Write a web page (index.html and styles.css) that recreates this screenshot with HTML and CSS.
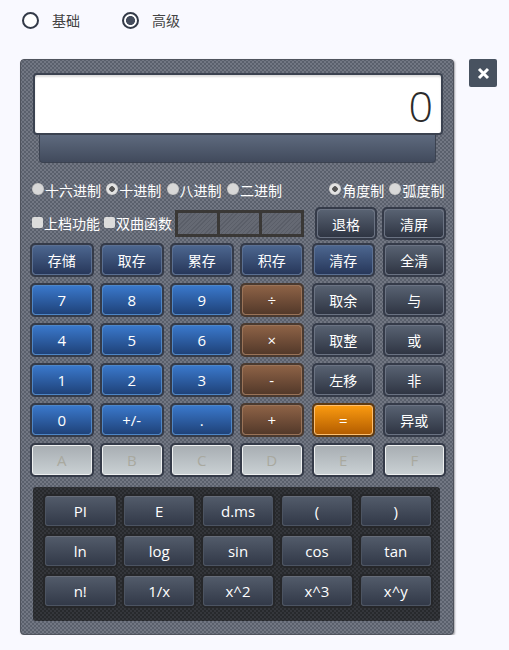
FILE: index.html
```html
<!DOCTYPE html>
<html lang="zh">

<head>
    <meta charset="UTF-8">
    <meta name="viewport" content="width=device-width, initial-scale=1.0">
    <title>计算器</title>
    <link rel="stylesheet" href="styles.css">
</head>

<body>

    <!-- Mode switch -->
    <div class="modes">
        <label class="mode"><span class="mode-dot"></span>基础</label>
        <label class="mode on"><span class="mode-dot"></span>高级</label>
    </div>

    <div class="main">
        <div class="calc">
            <div class="screen">0</div>
            <div class="screen-foot"></div>

            <div class="options">
                <label class="opt"><span class="dot"></span>十六进制</label>
                <label class="opt on"><span class="dot"></span>十进制</label>
                <label class="opt"><span class="dot"></span>八进制</label>
                <label class="opt"><span class="dot"></span>二进制</label>
                <label class="opt on push"><span class="dot"></span>角度制</label>
                <label class="opt"><span class="dot"></span>弧度制</label>
            </div>

            <div class="tools">
                <label class="check"><span class="box"></span>上档功能</label>
                <label class="check"><span class="box"></span>双曲函数</label>
                <div class="memory">
                    <span class="cell"></span>
                    <span class="cell"></span>
                    <span class="cell"></span>
                </div>
                <button class="key grey back">退格</button>
                <button class="key grey clear">清屏</button>
            </div>

            <div class="keypad">
                <button class="key navy">存储</button>
                <button class="key navy">取存</button>
                <button class="key navy">累存</button>
                <button class="key navy">积存</button>
                <button class="key navy">清存</button>
                <button class="key grey">全清</button>

                <button class="key blue">7</button>
                <button class="key blue">8</button>
                <button class="key blue">9</button>
                <button class="key brown">÷</button>
                <button class="key grey">取余</button>
                <button class="key grey">与</button>

                <button class="key blue">4</button>
                <button class="key blue">5</button>
                <button class="key blue">6</button>
                <button class="key brown">×</button>
                <button class="key grey">取整</button>
                <button class="key grey">或</button>

                <button class="key blue">1</button>
                <button class="key blue">2</button>
                <button class="key blue">3</button>
                <button class="key brown">-</button>
                <button class="key grey">左移</button>
                <button class="key grey">非</button>

                <button class="key blue">0</button>
                <button class="key blue">+/-</button>
                <button class="key blue">.</button>
                <button class="key brown">+</button>
                <button class="key orange">=</button>
                <button class="key grey">异或</button>

                <button class="key light">A</button>
                <button class="key light">B</button>
                <button class="key light">C</button>
                <button class="key light">D</button>
                <button class="key light">E</button>
                <button class="key light">F</button>
            </div>

            <!-- Scientific functions -->
            <div class="sci">
                <button class="fn">PI</button>
                <button class="fn">E</button>
                <button class="fn">d.ms</button>
                <button class="fn">(</button>
                <button class="fn">)</button>
                <button class="fn">ln</button>
                <button class="fn">log</button>
                <button class="fn">sin</button>
                <button class="fn">cos</button>
                <button class="fn">tan</button>
                <button class="fn">n!</button>
                <button class="fn">1/x</button>
                <button class="fn">x^2</button>
                <button class="fn">x^3</button>
                <button class="fn">x^y</button>
            </div>
        </div>

        <button class="close">
            <svg width="13" height="13" viewBox="0 0 13 13">
                <path d="M2 2 L11 11 M11 2 L2 11" stroke="#fff" stroke-width="3" fill="none" />
            </svg>
        </button>
    </div>

</body>

</html>
```

FILE: styles.css
```css
* {
    box-sizing: border-box;
}

body {
    margin: 0;
    background-color: #f9f9ff;
    font-family: "Open Sans", "Noto Sans CJK SC", sans-serif;
    font-size: 14px;
}

.modes {
    display: flex;
    height: 59px;
    padding: 11px 0 0 22px;
    color: #444;
}

.mode {
    display: flex;
    align-items: center;
    height: 18px;
    width: 100px;
}

.mode-dot {
    width: 17px;
    height: 17px;
    margin-right: 13px;
    border: 2px solid #333a48;
    border-radius: 50%;
    background-color: #fff;
}

.mode.on .mode-dot {
    background: radial-gradient(circle, #444c5c 0 4.2px, #fff 4.8px);
}

.main {
    display: flex;
    align-items: flex-start;
    padding-left: 20px;
}

.calc {
    width: 434px;
    height: 576px;
    padding: 13px 7px 0 9px;
    border: 1px solid #50545e;
    border-radius: 4px;
    background-color: #727783;
    background-image:
        radial-gradient(circle, #5a606c 0.8px, transparent 1.2px),
        radial-gradient(circle, #5a606c 0.8px, transparent 1.2px);
    background-position: 0 0, 2px 2px;
    background-size: 4px 4px;
    box-shadow: 1px 1px 2px rgba(0, 0, 0, 0.35);
}

.screen {
    height: 62px;
    margin: 0 3px;
    padding-right: 8px;
    border: 2px solid #3b4250;
    border-radius: 4px;
    background-color: #fff;
    box-shadow: inset 0 2px 2px #ddd;
    color: #2b2b2b;
    font-size: 43px;
    font-weight: 300;
    line-height: 62px;
    text-align: right;
}

.screen-foot {
    height: 28px;
    margin: 0 10px 0 9px;
    border: 1px solid #3b4250;
    border-top: none;
    border-radius: 0 0 4px 4px;
    background-image: linear-gradient(#5e6a7e, #414a5c);
}

.options {
    display: flex;
    height: 20px;
    margin-top: 18px;
    padding-left: 2px;
    color: #fff;
    white-space: nowrap;
}

.opt {
    display: flex;
    margin-right: 5.3px;
    line-height: 20px;
}

.opt.push {
    margin-left: 42px;
}

.dot {
    flex: none;
    width: 12px;
    height: 12px;
    margin: 2px 1px 0 0;
    border-radius: 50%;
    background-color: #d8d8d8;
    box-shadow: inset 0 0 1px #888;
}

.opt.on .dot {
    background: radial-gradient(circle, #555 0 2.5px, #e4e4e4 3px);
}

.tools {
    display: flex;
    align-items: center;
    height: 33px;
    margin-top: 6px;
    padding-left: 2px;
    white-space: nowrap;
}

.check {
    display: flex;
    margin-right: 4px;
    color: #fff;
    line-height: 20px;
}

.box {
    flex: none;
    width: 11px;
    height: 11px;
    margin: 3px 1px 0 0;
    border-radius: 2px;
    background-color: #dcdcdc;
}

.memory {
    display: flex;
    flex: none;
    gap: 3px;
    height: 27px;
    margin-left: -1px;
    border: 3px solid #3a3836;
    background-color: #3a3836;
}

.cell {
    width: 39px;
    background-image: repeating-linear-gradient(135deg, #5a5e68 0 1px, #656973 1px 3px);
}

.key {
    height: 30px;
    padding: 0;
    border: 1px solid #6a7282;
    border-radius: 3px;
    box-shadow: 0 0 0 2px #353b49;
    color: #fff;
    font-family: inherit;
    font-size: 14px;
    background-clip: padding-box;
}

.tools .key {
    flex: none;
    height: 29px;
}

.back {
    width: 58px;
    margin-left: 13px;
}

.clear {
    width: 60px;
    margin-left: 9px;
}

.keypad {
    display: grid;
    grid-template-columns: 70px 70px 70px 71.5px 71px 63.5px;
    row-gap: 6px;
    margin-top: 3px;
}

.keypad .key {
    width: 59.5px;
    margin: 2px;
}

.navy {
    background-image: linear-gradient(#4c668f, #27375a);
    border-color: #5a6f92;
}

.grey {
    background-image: linear-gradient(#586272, #2f3543);
}

.blue {
    background-image: linear-gradient(#3a78cb, #1f4279);
    border-color: #4d86c8;
    font-size: 15px;
}

.brown {
    background-image: linear-gradient(#8d6246, #53392a);
    border-color: #9a7358;
    box-shadow: 0 0 0 2px #4a3a30;
    font-size: 15px;
}

.orange {
    background-image: linear-gradient(#fa9a10, #b45d00);
    border-color: #ffc070;
    box-shadow: 0 0 0 2px #5e3a12;
    font-size: 15px;
}

.light {
    background-image: linear-gradient(#a8aeb3, #c9d0d3);
    border-color: #eef0f0;
    color: #a9a99f;
    font-size: 15px;
}

.sci {
    display: grid;
    grid-template-columns: repeat(5, 70.5px);
    grid-auto-rows: 30px;
    gap: 10px 8.4px;
    height: 134px;
    margin: 10px 6px 0 3px;
    padding: 9px 0 0 12px;
    border-radius: 3px;
    background-color: #34363b;
    background-image:
        radial-gradient(circle, #27292c 0.8px, transparent 1.2px),
        radial-gradient(circle, #27292c 0.8px, transparent 1.2px);
    background-position: 0 0, 2px 2px;
    background-size: 4px 4px;
}

.fn {
    height: 30px;
    padding: 0;
    border: 1px solid #4c5462;
    border-top-color: #676d79;
    border-radius: 3px;
    box-shadow: 0 0 0 2px #26272a;
    background-image: linear-gradient(#525b6a, #323948);
    color: #fff;
    font-family: inherit;
    font-size: 15px;
}

.close {
    display: flex;
    align-items: center;
    justify-content: center;
    width: 28px;
    height: 28px;
    margin-left: 15px;
    padding: 0;
    border: none;
    border-radius: 2px;
    background-color: #485260;
}
```
